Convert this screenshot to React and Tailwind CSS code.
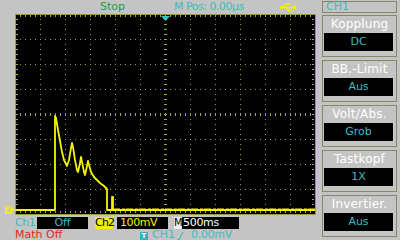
import React from 'react'

const font = { fontFamily: '"DejaVu Sans", "Liberation Sans", sans-serif' }

const trace = [
    [0, 196], [40, 196], [40, 102], [41, 104], [43, 116], [45, 127], [47, 138], [49, 146], [52, 152],
    [54, 146], [56, 134], [57, 129], [58, 133], [60, 146], [62, 156], [63, 158], [65, 149], [66, 143],
    [67, 148], [69, 158], [70, 161], [72, 152], [73, 147], [74, 151], [76, 158], [79, 163], [82, 166],
    [85, 169], [89, 172], [92, 175], [92, 196], [97, 196], [97, 183], [98, 183], [98, 196], [300, 196],
]

const Graticule = () => {
    const dots = []
    // dotted division lines
    for (let i = 1; i < 12; i++) {
        if (i === 6) continue
        for (let y = 5; y < 200; y += 5) dots.push(<rect key={`v${i}-${y}`} x={i * 25} y={y} width="1" height="1" />)
    }
    for (let j = 1; j < 8; j++) {
        if (j === 4) continue
        for (let x = 5; x < 300; x += 5) dots.push(<rect key={`h${j}-${x}`} x={x} y={j * 25} width="1" height="1" />)
    }
    const ticks = []
    for (let x = 5; x < 300; x += 5) {
        ticks.push(<rect key={`tt${x}`} x={x} y="1" width="1" height="2" />)
        ticks.push(<rect key={`tb${x}`} x={x} y="197" width="1" height="2" />)
        ticks.push(<rect key={`tc${x}`} x={x} y="99" width="1" height="3" />)
    }
    for (let y = 5; y < 200; y += 5) {
        ticks.push(<rect key={`tl${y}`} x="1" y={y} width="2" height="1" />)
        ticks.push(<rect key={`tr${y}`} x="297" y={y} width="2" height="1" />)
        ticks.push(<rect key={`tm${y}`} x="149" y={y} width="3" height="1" />)
    }
    return (
        <svg width="301" height="201" viewBox="0 0 301 201" className="block bg-black">
            <g fill="#9c9c4e">{dots}</g>
            <g fill="#a4a452">{ticks}</g>
            <rect x="0.5" y="0.5" width="300" height="200" fill="none" stroke="#9a9a48" />
            <polygon points="146,2 155,2 150.5,7" fill="#2fc8c8" />
            <polyline
                points={trace.map((p) => p.join(',')).join(' ')}
                fill="none"
                stroke="#f4f400"
                strokeWidth="1.8"
                strokeLinejoin="round"
            />
            <polyline points="98,195 300,195" fill="none" stroke="#f4f400" strokeWidth="1" strokeDasharray="7 2 3 1" />
        </svg>
    )
}

const MenuBox = ({ title, value }) => (
    <div className="h-[42px] w-[75px] border border-[#878768] flex flex-col items-center">
        <div className="h-[16px] leading-[16px] text-white text-[12px] tracking-[0.2px]">{title}</div>
        <div className="mt-[1px] ml-[1px] mr-auto h-[18px] w-[69px] bg-black text-[#3dbcc4] text-[11px] leading-[18px] text-center">
            {value}
        </div>
    </div>
)

const App = () => {
    return (
        <div className="w-[400px] h-[240px] bg-[#c4c4c4] flex overflow-hidden" style={font}>
            <div className="w-[322px] flex flex-col">
                {/* status line */}
                <div className="h-[14px] flex items-center text-[11px]">
                    <div className="w-[100px]" />
                    <div className="w-[74px] text-[#1f9d3a]">Stop</div>
                    <div className="w-[106px] text-[#3cbcc4] tracking-[-0.5px]">M Pos: 0.00µs</div>
                    <svg width="17" height="9" viewBox="0 0 17 9">
                        <path d="M0 4.5h14M3 4.5l3-3.5h4M6 4.5l3 3h3" stroke="#f2f200" strokeWidth="1.6" fill="none" />
                        <circle cx="14.5" cy="4.5" r="2" fill="#f2f200" />
                        <rect x="0" y="3" width="3" height="3" fill="#f2f200" />
                    </svg>
                </div>
                {/* screen */}
                <div className="flex h-[201px]">
                    <div className="w-[15px] flex flex-col justify-end">
                        <div className="mb-[1px] mr-[1px] ml-[5px] h-[8px] bg-[#f0f000] text-[#c4c4c4] text-[8px] leading-[8px] font-bold pl-[1px] [clip-path:polygon(0_0,70%_0,100%_50%,70%_100%,0_100%)]">
                            2
                        </div>
                    </div>
                    <Graticule />
                </div>
                {/* channel readouts */}
                <div className="h-[14px] mt-[1px] flex items-center text-[11px]">
                    <div className="w-[15px]" />
                    <div className="w-[22px] text-[#3cbcc4] tracking-[-0.5px]">Ch1</div>
                    <div className="w-[51px] h-[12px] bg-black text-[#3cbcc4] text-center leading-[12px]">Off</div>
                    <div className="w-[7px]" />
                    <div className="w-[18px] h-[12px] bg-[#f0f000] text-black text-center leading-[12px] tracking-[-0.8px]">Ch2</div>
                    <div className="w-[4px]" />
                    <div className="w-[51px] h-[12px] bg-black text-[#f0f000] leading-[12px] pl-[3px] tracking-[-0.4px]">100mV</div>
                    <div className="w-[6px]" />
                    <div className="w-[8px] h-[12px] bg-[#eeeeee] text-black text-[10px] leading-[12px] text-center">M</div>
                    <div className="w-[57px] h-[12px] bg-black text-white leading-[12px] pl-[1px] tracking-[-0.3px]">500ms</div>
                </div>
                <div className="h-[11px] flex items-center text-[11px]">
                    <div className="w-[15px]" />
                    <div className="w-[125px] text-[#e02a1c]">Math Off</div>
                    <div className="w-[8px] h-[8px] bg-[#30b4bc] text-white text-[7px] leading-[8px] text-center font-bold">T</div>
                    <div className="w-[28px] pl-[4px] text-[#3cbcc4]">CH1</div>
                    <svg width="13" height="9" viewBox="0 0 13 9">
                        <path d="M1 8.5h2L7 1" stroke="#3cbcc4" strokeWidth="1.2" fill="none" />
                    </svg>
                    <div className="text-[#3cbcc4] pl-[2px] tracking-[-0.3px]">0.00mV</div>
                </div>
            </div>
            {/* side menu */}
            <div className="w-[78px] flex flex-col pt-[1px]">
                <div className="h-[12px] w-[75px] border border-[#878768] text-[#3cbcc4] text-[11px] leading-[10px] pl-[3px]">CH1</div>
                <div className="mt-[2px] flex flex-col gap-[3px]">
                    <MenuBox title="Kopplung" value="DC" />
                    <MenuBox title="BB.-Limit" value="Aus" />
                    <MenuBox title="Volt/Abs." value="Grob" />
                    <MenuBox title="Tastkopf" value="1X" />
                    <MenuBox title="Invertier." value="Aus" />
                </div>
            </div>
        </div>
    )
}

export default App
